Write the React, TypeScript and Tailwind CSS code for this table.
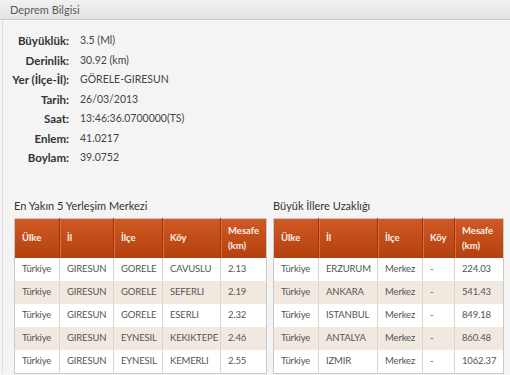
import React from "react";

type Row = string[];

const infoRows: [string, string][] = [
  ["Büyüklük:", "3.5 (Ml)"],
  ["Derinlik:", "30.92 (km)"],
  ["Yer (İlçe-İl):", "GÖRELE-GIRESUN"],
  ["Tarih:", "26/03/2013"],
  ["Saat:", "13:46:36.0700000(TS)"],
  ["Enlem:", "41.0217"],
  ["Boylam:", "39.0752"],
];

const nearest: Row[] = [
  ["Türkiye", "GIRESUN", "GORELE", "CAVUSLU", "2.13"],
  ["Türkiye", "GIRESUN", "GORELE", "SEFERLI", "2.19"],
  ["Türkiye", "GIRESUN", "GORELE", "ESERLI", "2.32"],
  ["Türkiye", "GIRESUN", "EYNESIL", "KEKIKTEPE", "2.46"],
  ["Türkiye", "GIRESUN", "EYNESIL", "KEMERLI", "2.55"],
];

const cities: Row[] = [
  ["Türkiye", "ERZURUM", "Merkez", "-", "224.03"],
  ["Türkiye", "ANKARA", "Merkez", "-", "541.43"],
  ["Türkiye", "ISTANBUL", "Merkez", "-", "849.18"],
  ["Türkiye", "ANTALYA", "Merkez", "-", "860.48"],
  ["Türkiye", "IZMIR", "Merkez", "-", "1062.37"],
];

const headers = ["Ülke", "İl", "İlçe", "Köy"];

const DataTable: React.FC<{ title: string; rows: Row[]; cols: number[]; width: string }> = ({ title, rows, cols, width }) => {
  return (
    <div className={width}>
      <div className="text-[11px] leading-[15px] text-[#333] mb-[5px]">{title}</div>
      <table className="w-full table-fixed border-collapse border border-[#c9c9c9] bg-white">
        <colgroup>
          {cols.map((w, i) => (
            <col key={i} style={{ width: w }} />
          ))}
        </colgroup>
        <thead>
          <tr className="h-[40px] bg-gradient-to-b from-[#cf5a24] to-[#b4400e]">
            {headers.map((h, i) => (
              <th
                key={h}
                className={
                  i === 0
                    ? "text-left align-middle pl-[7px] text-[9.5px] font-bold text-[#fdf0e8]"
                    : "text-left align-middle pl-[7px] text-[9.5px] font-bold text-[#fdf0e8] border-l border-[#9c3408] shadow-[inset_1px_0_0_#d9733e]"
                }
              >
                {h}
              </th>
            ))}
            <th className="text-left align-middle pl-[7px] text-[9.5px] font-bold text-[#fdf0e8] leading-[15px] border-l border-[#9c3408] shadow-[inset_1px_0_0_#d9733e]">
              Mesafe
              <br />
              (km)
            </th>
          </tr>
        </thead>
        <tbody>
          {rows.map((r, i) => (
            <tr key={i} className={i % 2 === 1 ? "h-[23px] bg-[#f1e9df]" : "h-[23px] bg-white"}>
              {r.map((c, j) => (
                <td key={j} className="pl-[7px] text-[9.5px] tracking-[-0.15px] text-[#555] border-l border-[#dcd6cf] first:border-l-0 whitespace-nowrap">
                  {c}
                </td>
              ))}
            </tr>
          ))}
        </tbody>
      </table>
    </div>
  );
};

export default function App() {
  return (
    <div className="w-[510px] h-[375px] overflow-hidden bg-[#f4f4f4] font-['Lato',sans-serif]">
      <div className="h-[20px] border-b border-[#c9c9c9] bg-gradient-to-b from-[#f2f2f2] to-[#e3e3e3] pl-[10px] text-[11px] leading-[19px] text-[#5a5a5a]">
        Deprem Bilgisi
      </div>
      <div className="border-l border-[#dedede] ml-[2px]">
        <div className="pt-[11px] pl-[8px] grid grid-cols-[58px_1fr] gap-x-[11px] leading-[19.5px]">
          {infoRows.map(([k, v]) => (
            <React.Fragment key={k}>
              <div className="text-right text-[11.5px] font-bold text-[#333] whitespace-nowrap">{k}</div>
              <div className="text-[10.5px] text-[#444]">{v}</div>
            </React.Fragment>
          ))}
        </div>
        <div className="flex gap-[7px] pl-[11px] pt-[30px]">
          <DataTable title="En Yakın 5 Yerleşim Merkezi" rows={nearest} cols={[45, 54, 49, 58, 46]} width="w-[252px]" />
          <DataTable title="Büyük İllere Uzaklığı" rows={cities} cols={[45, 59, 45, 32, 49]} width="w-[230px]" />
        </div>
      </div>
    </div>
  );
}
